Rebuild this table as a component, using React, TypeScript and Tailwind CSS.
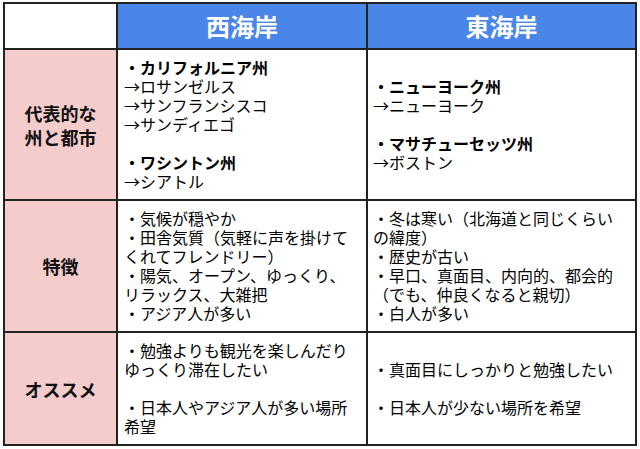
const font = { fontFamily: '"Noto Sans CJK JP", "Noto Sans", sans-serif' }

function Lines({ lines }: { lines: { t: string; b?: boolean }[] }) {
  return (
    <div className="text-[16px] leading-[19px] text-black whitespace-nowrap">
      {lines.map((l, i) => (
        <div key={i} className={l.b ? "font-bold" : ""}>
          {l.t === "" ? "\u00a0" : l.t}
        </div>
      ))}
    </div>
  )
}

function Label({ text }: { text: string[] }) {
  return (
    <div className="bg-[#f4cccc] flex items-center justify-center text-center font-bold text-[18px] leading-[24px] text-[#111]">
      <div>
        {text.map((t, i) => (
          <div key={i}>{t}</div>
        ))}
      </div>
    </div>
  )
}

function Cell({ children, pl = "pl-[6px]" }: { children: React.ReactNode; pl?: string }) {
  return <div className={`bg-white flex items-center ${pl}`}>{children}</div>
}

export default function App() {
  return (
    <div className="w-[640px] h-[449px] bg-white pt-[2px] pl-[3px]" style={font}>
      <div className="inline-grid grid-cols-[111px_248px_267px] grid-rows-[44px_149px_130px_111px] gap-[2px] p-[2px] bg-[#222]">
        <div className="bg-white" />
        <div className="bg-[#4a86e8] flex items-center justify-center text-white font-bold text-[24px]">西海岸</div>
        <div className="bg-[#4a86e8] flex items-center justify-center text-white font-bold text-[24px]">東海岸</div>

        <Label text={["代表的な", "州と都市"]} />
        <Cell>
          <Lines
            lines={[
              { t: "・カリフォルニア州", b: true },
              { t: "→ロサンゼルス" },
              { t: "→サンフランシスコ" },
              { t: "→サンディエゴ" },
              { t: "" },
              { t: "・ワシントン州", b: true },
              { t: "→シアトル" },
            ]}
          />
        </Cell>
        <Cell pl="pl-[5px]">
          <Lines
            lines={[
              { t: "・ニューヨーク州", b: true },
              { t: "→ニューヨーク" },
              { t: "" },
              { t: "・マサチューセッツ州", b: true },
              { t: "→ボストン" },
            ]}
          />
        </Cell>

        <Label text={["特徴"]} />
        <Cell>
          <Lines
            lines={[
              { t: "・気候が穏やか" },
              { t: "・田舎気質（気軽に声を掛けて" },
              { t: "くれてフレンドリー）" },
              { t: "・陽気、オープン、ゆっくり、" },
              { t: "リラックス、大雑把" },
              { t: "・アジア人が多い" },
            ]}
          />
        </Cell>
        <Cell pl="pl-[5px]">
          <Lines
            lines={[
              { t: "・冬は寒い（北海道と同じくらい" },
              { t: "の緯度）" },
              { t: "・歴史が古い" },
              { t: "・早口、真面目、内向的、都会的" },
              { t: "（でも、仲良くなると親切）" },
              { t: "・白人が多い" },
            ]}
          />
        </Cell>

        <Label text={["オススメ"]} />
        <Cell>
          <Lines
            lines={[
              { t: "・勉強よりも観光を楽しんだり" },
              { t: "ゆっくり滞在したい" },
              { t: "" },
              { t: "・日本人やアジア人が多い場所" },
              { t: "希望" },
            ]}
          />
        </Cell>
        <Cell pl="pl-[5px]">
          <Lines
            lines={[
              { t: "・真面目にしっかりと勉強したい" },
              { t: "" },
              { t: "・日本人が少ない場所を希望" },
            ]}
          />
        </Cell>
      </div>
    </div>
  )
}
